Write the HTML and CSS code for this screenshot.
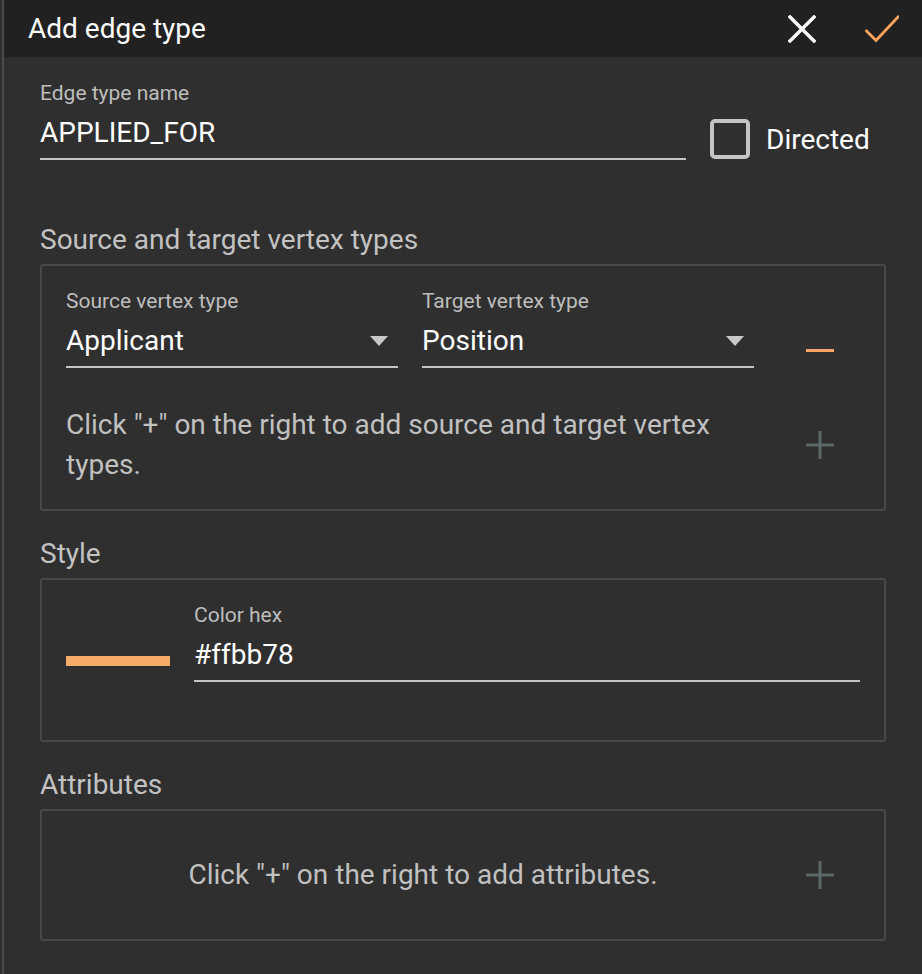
FILE: index.html
```html
<!DOCTYPE html>
<html lang="en">
<head>
<meta charset="utf-8">
<title>Add edge type</title>
<link rel="stylesheet" href="styles.css">
</head>
<body>
<div class="app">
  <header class="bar">
    <h1 class="bar-title">Add edge type</h1>
    <div class="bar-actions">
      <button class="icon-btn close-btn" aria-label="Close">
        <svg width="28" height="28" viewBox="0 0 28 28"><path d="M2 2 L26 26 M26 2 L2 26" stroke="#ffffff" stroke-width="3.4" stroke-linecap="square" fill="none"/></svg>
      </button>
      <button class="icon-btn ok-btn" aria-label="Save">
        <svg width="34" height="28" viewBox="0 0 34 28"><path d="M1.5 16 L11 25.5 L33 2" stroke="#ffa45c" stroke-width="2.8" stroke-linecap="square" fill="none"/></svg>
      </button>
    </div>
  </header>

  <main class="content">
    <div class="name-row">
      <div class="field grow">
        <label class="field-label">Edge type name</label>
        <div class="field-input">APPLIED_FOR</div>
      </div>
      <label class="check">
        <span class="check-box"></span>
        <span class="check-text">Directed</span>
      </label>
    </div>

    <section class="section first">
      <h2 class="section-title">Source and target vertex types</h2>
      <div class="panel">
        <div class="panel-row">
          <div class="pair">
            <div class="field">
              <label class="field-label">Source vertex type</label>
              <div class="field-input select"><span>Applicant</span><span class="caret"></span></div>
            </div>
            <div class="field">
              <label class="field-label">Target vertex type</label>
              <div class="field-input select"><span>Position</span><span class="caret"></span></div>
            </div>
          </div>
          <div class="action action-bottom">
            <span class="minus"></span>
          </div>
        </div>
        <div class="panel-row hint-row">
          <p class="hint">Click "+" on the right to add source and target vertex types.</p>
          <div class="action">
            <svg class="plus" width="28" height="28" viewBox="0 0 28 28"><path d="M14 0 V28 M0 14 H28" stroke="#5d6868" stroke-width="3" fill="none"/></svg>
          </div>
        </div>
      </div>
    </section>

    <section class="section">
      <h2 class="section-title">Style</h2>
      <div class="panel style-panel">
        <div class="style-row">
          <span class="swatch"></span>
          <div class="field grow">
            <label class="field-label">Color hex</label>
            <div class="field-input">#ffbb78</div>
          </div>
        </div>
      </div>
    </section>

    <section class="section">
      <h2 class="section-title">Attributes</h2>
      <div class="panel attr-panel">
        <div class="panel-row attr-row">
          <p class="hint center">Click "+" on the right to add attributes.</p>
          <div class="action">
            <svg class="plus" width="28" height="28" viewBox="0 0 28 28"><path d="M14 0 V28 M0 14 H28" stroke="#5d6868" stroke-width="3" fill="none"/></svg>
          </div>
        </div>
      </div>
    </section>
  </main>
</div>
</body>
</html>
```

FILE: styles.css
```css
* { box-sizing: border-box; }

html, body {
  margin: 0;
  padding: 0;
  background: #2f2f2f;
}

body {
  font-family: Roboto, "Noto Sans", "Liberation Sans", sans-serif;
  color: #ffffff;
  width: 922px;
  height: 974px;
  overflow: hidden;
}

.app {
  margin-left: 2px;
  border-left: 2px solid #4a4a4a;
  min-height: 974px;
}

.bar {
  height: 57px;
  background: #212121;
  display: flex;
  align-items: center;
  justify-content: space-between;
  padding: 0 23px 0 24px;
}

.bar-title {
  margin: 0;
  font-size: 28px;
  font-weight: 400;
  line-height: 33px;
  color: #ffffff;
  margin-top: -1px;
}

.bar-actions {
  display: flex;
  align-items: center;
  gap: 49px;
}

.icon-btn {
  background: none;
  border: 0;
  padding: 0;
  margin: 0;
  display: flex;
  cursor: pointer;
}

.content {
  padding: 24px 36px 0 36px;
}

.name-row {
  display: flex;
  align-items: flex-end;
  gap: 24px;
}

.field {
  display: flex;
  flex-direction: column;
  min-width: 0;
}

.grow { flex: 1; }

.field-label {
  font-size: 21px;
  line-height: 24px;
  color: #bdbdbd;
  margin-bottom: 11px;
}

.field-input {
  font-size: 28px;
  line-height: 33px;
  color: #ffffff;
  padding-bottom: 9px;
  border-bottom: 2px solid #c4c4c4;
}

.select {
  display: flex;
  align-items: center;
  justify-content: space-between;
}

.caret {
  width: 0;
  height: 0;
  border-left: 9.5px solid transparent;
  border-right: 9.5px solid transparent;
  border-top: 10px solid #c8c8c8;
  margin-right: 10px;
  margin-top: 1px;
}

.check {
  width: 176px;
  display: flex;
  align-items: center;
  gap: 16px;
  margin-bottom: 1px;
}

.check-box {
  width: 40px;
  height: 40px;
  border: 4px solid #c4c4c4;
  border-radius: 5px;
  flex: none;
}

.check-text {
  font-size: 28px;
  line-height: 33px;
  color: #ffffff;
}

.section { margin-top: 26px; }
.section.first { margin-top: 63px; }

.section-title {
  margin: 0 0 8px 0;
  font-size: 28px;
  font-weight: 400;
  line-height: 33px;
  color: #c2c2c2;
}

.panel {
  border: 2px solid #484848;
  border-radius: 3px;
  padding: 23px 24px 24px 24px;
}

.panel-row {
  display: flex;
}

.pair {
  flex: 1;
  display: grid;
  grid-template-columns: 1fr 1fr;
  gap: 24px;
  margin-right: 26px;
}

.action {
  width: 80px;
  flex: none;
  display: flex;
  align-items: center;
  justify-content: center;
}

.action-bottom {
  align-self: flex-end;
  height: 28px;
  margin-bottom: 4px;
}

.minus {
  display: block;
  width: 28px;
  height: 3px;
  background: #f5a465;
}

.hint-row {
  margin-top: 37px;
  align-items: center;
}

.hint {
  flex: 1;
  margin: 0;
  font-size: 28px;
  line-height: 40px;
  color: #c0c0c0;
}

.hint.center { text-align: center; }

.plus { display: block; }

.style-panel {
  padding-bottom: 58px;
}

.style-row {
  display: flex;
  gap: 24px;
}

.swatch {
  width: 104px;
  height: 10px;
  background: #f6ab6b;
  align-self: flex-end;
  margin-bottom: 16px;
  flex: none;
}

.attr-panel {
  height: 132px;
  padding: 0 24px;
  display: flex;
  align-items: center;
}

.attr-row {
  width: 100%;
  align-items: center;
}
```
